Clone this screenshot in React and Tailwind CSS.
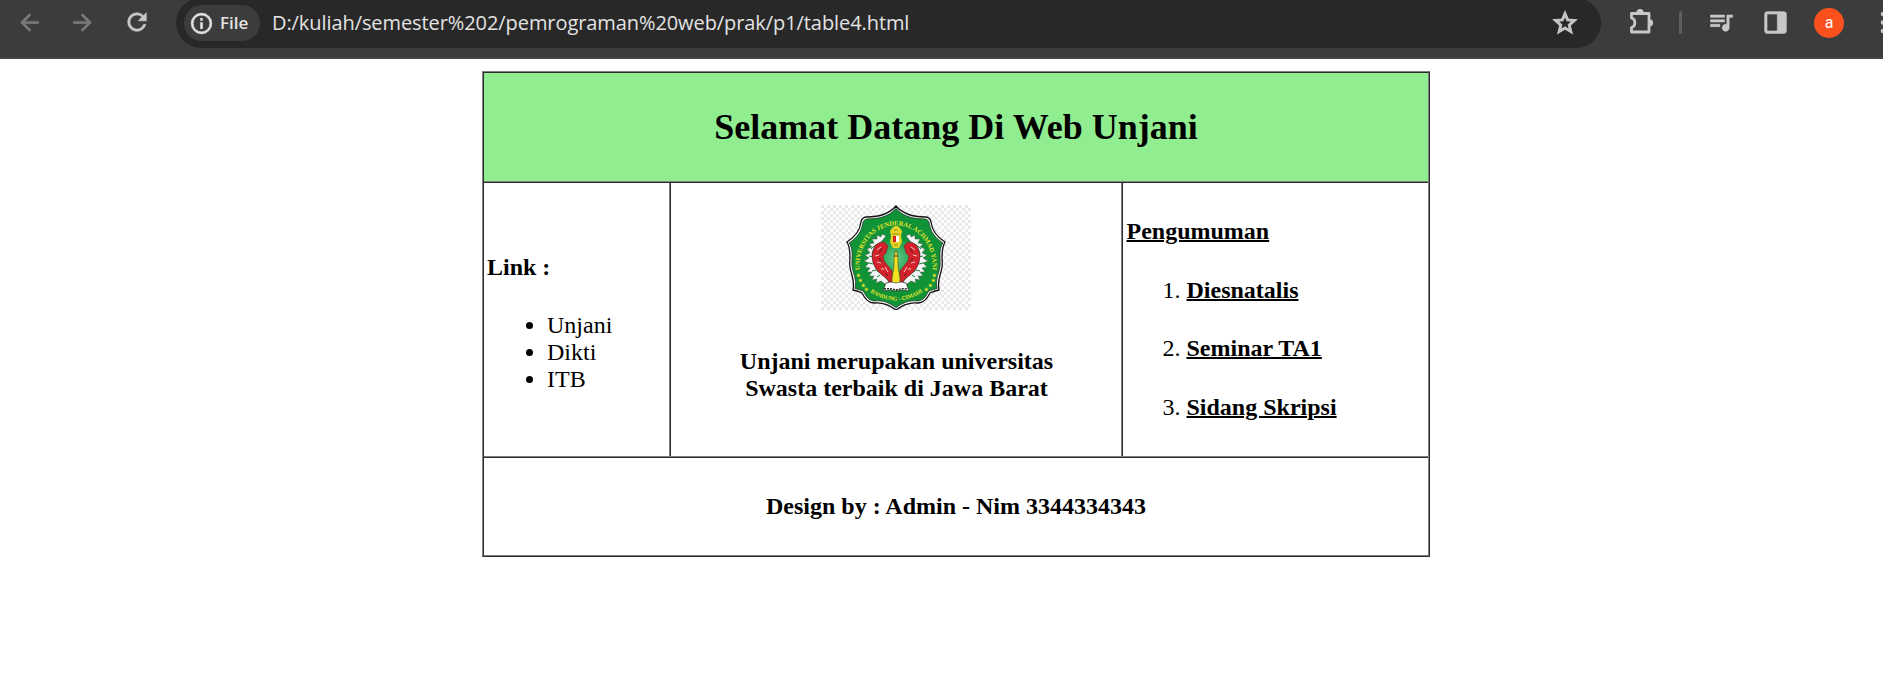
const glyph = "shrink-0 fill-[#c7c7c7] stroke-[#c7c7c7]";

function Icon({ d, className, size = 30, weight = 0.5 }) {
  return (
    <svg viewBox="0 0 24 24" width={size} height={size} strokeWidth={weight} className={className}>
      <path d={d} />
    </svg>
  );
}

function Toolbar() {
  return (
    <header className="flex h-[59px] w-full items-start overflow-hidden border-b-2 border-[#474747] bg-[#3c3c3c]">
      <Icon size={27} className="mt-[9px] ml-4 shrink-0 fill-[#7a7a7a] stroke-[#7a7a7a]" d="M20 11H7.83l5.59-5.59L12 4l-8 8 8 8 1.41-1.41L7.83 13H20v-2z" />
      <Icon size={27} className="mt-[9px] ml-[26px] shrink-0 fill-[#7a7a7a] stroke-[#7a7a7a]" d="M12 4l-1.41 1.41L16.17 11H4v2h12.17l-5.58 5.59L12 20l8-8z" />
      <Icon size={28} className={`mt-2 ml-[27px] ${glyph}`} d="M17.65 6.35A7.96 7.96 0 0 0 12 4a8 8 0 1 0 7.73 10h-2.08A6 6 0 1 1 12 6c1.66 0 3.14.69 4.22 1.78L13 11h7V4z" />
      <div className="-mt-[2px] ml-[25px] flex h-[50px] w-[1425px] shrink-0 items-center rounded-full bg-[#282828] pl-2">
        <div className="flex h-9 w-[76px] items-center rounded-full bg-[#3c3c3c] pl-[5px]">
          <Icon size={25} className="shrink-0 fill-[#e3e3e3] stroke-[#e3e3e3]" d="M11 7h2v2h-2zm0 4h2v6h-2zm1-9a10 10 0 1 0 0 20 10 10 0 0 0 0-20zm0 18a8 8 0 1 1 0-16 8 8 0 0 1 0 16z" />
          <span className="ml-[6px] font-['Open_Sans',sans-serif] text-[17px] font-semibold text-[#e3e3e3]">File</span>
        </div>
        <span className="ml-[12px] font-['Open_Sans',sans-serif] text-[20px] tracking-[-0.08px] whitespace-nowrap text-[#e3e3e3]">
          D:/kuliah/semester%202/pemrograman%20web/prak/p1/table4.html
        </span>
        <Icon size={28} weight={0.9} className={`mr-[22px] ml-auto ${glyph}`} d="M22 9.24l-7.19-.62L12 2 9.19 8.63 2 9.24l5.46 4.73L5.82 21 12 17.27 18.18 21l-1.63-7.03zM12 15.4l-3.76 2.27 1-4.28-3.32-2.88 4.38-.38L12 6.1l1.71 4.04 4.38.38-3.32 2.88 1 4.28z" />
      </div>
      <svg viewBox="0 0 28 28" width="28" height="28" className="mt-[7px] ml-[26px] shrink-0">
        <path d="M4.5 6.500H22V25H4.500V20.500C9 19.500 9 12 4.500 11Z" fill="none" stroke="#c7c7c7" strokeWidth="2.800" strokeLinejoin="round" />
        <path d="M9.500 5.500a3.600 3.600 0 0 1 7.200 0zM22.500 12.200a3.600 3.600 0 0 1 0 7.200z" fill="#c7c7c7" />
      </svg>
      <div className="mt-[11px] ml-[24px] h-[23px] w-[3px] shrink-0 rounded-full bg-[#5f5f5f]" />
      <Icon size={28} className={`mt-2 ml-[25px] ${glyph}`} d="M15 6H3v2h12V6zm0 4H3v2h12v-2zM3 16h8v-2H3v2zM17 6v8.180c-.31-.11-.65-.18-1-.18-1.66 0-3 1.340-3 3s1.340 3 3 3 3-1.340 3-3V8h3V6h-5z" />
      <Icon size={29} className={`mt-2 ml-[26px] ${glyph}`} d="M19 3H5a2 2 0 0 0-2 2v14c0 1.100.9 2 2 2h14a2 2 0 0 0 2-2V5a2 2 0 0 0-2-2zM5 5h8.500v14H5z" />
      <div className="mt-2 ml-6 flex size-[30px] shrink-0 items-center justify-center rounded-full bg-[#f9501e] font-[Roboto,sans-serif] text-[16px] text-white">a</div>
      <svg viewBox="0 0 6 24" width="6" height="24" className="mt-[11px] ml-[36px] shrink-0 fill-[#c7c7c7]">
        <circle cx="3" cy="3" r="2.300" />
        <circle cx="3" cy="11.500" r="2.300" />
        <circle cx="3" cy="20" r="2.300" />
      </svg>
    </header>
  );
}

const shield =
  "M75 1C69 8 60 12 46 12Q41 12 40 17C39 25 34 32 26 37C31 46 28 54 29 62C30 70 34 74 32 85Q37 86 41 88C44 94 47 98 53 98C63 97 69 101 75 105C81 101 87 97 97 98C103 98 106 94 109 88Q113 86 118 85C116 74 120 70 121 62C122 54 119 46 124 37C116 32 111 25 110 17Q109 12 104 12C90 12 81 8 75 1Z";

function Flourish() {
  return (
    <g>
      <path
        d="M65 31L61 29L60 32L56 30L56 34L51 34L53 38L48 39L51 42L46 44L49 48L44 50L48 53L43 56L48 58L44 62L49 63L46 67L51 67L48 71L53 71L51 75L56 74L55 78L60 76L64 79L68 77L64 72L56 66L52 57L51 48L54 40L60 37Z"
        fill="#f4f4f4" stroke="#445f4c" strokeWidth=".5"
      />
      <path d="M50 44l3-3M48 51l4 1M48 58l4 1M51 66l4-1M56 72l3-2" stroke="#118236" strokeWidth="1" />
      <path
        d="M67 41L63 37L58 38L54 41L52 46L51 51L52 57L54 62L57 66L61 70L66 74L69 78L71 78L71 66L67 61L63 56L62 51L65 48L66 44Z"
        fill="#d3222b" stroke="#741c22" strokeWidth=".6"
      />
      <path d="M56 45l4-3M54 51l4-1M56 57l4 1M60 64l3 0M64 62l3 5" stroke="#f3d9d9" strokeWidth=".9" />
      <path d="M61 43l-3 5M58 53l3 4M64 68l3 3" stroke="#3d1a1c" strokeWidth=".7" />
    </g>
  );
}

function Crest() {
  return (
    <svg viewBox="0 0 150 105" width="150" height="105" className="mx-auto block">
      <defs>
        <pattern id="checks" width="6" height="6" patternUnits="userSpaceOnUse">
          <rect width="6" height="6" fill="#fff" />
          <path d="M0 0h3v3H0zM3 3h3v3H3z" fill="#e9e9e9" />
        </pattern>
        <radialGradient id="glow">
          <stop offset="0" stopColor="#62cc8d" />
          <stop offset="1" stopColor="#109337" />
        </radialGradient>
        <path id="topArc" d="M39 67A36.500 40 0 1 1 111 67" />
        <path id="lowArc" d="M48 86Q75 105 103 86" />
      </defs>
      <rect width="150" height="105" fill="url(#checks)" />
      <path d={shield} fill="#fff" stroke="#111" strokeWidth="1.300" />
      <path d={shield} fill="#109337" stroke="#222" strokeWidth=".7" transform="translate(3.400 2.400) scale(.955)" />
      <circle cx="75" cy="54" r="22" fill="url(#glow)" />
      <Flourish />
      <g transform="translate(150 0) scale(-1 1)"><Flourish /></g>
      <path d="M72 22q3-2 6 0l3 4-1 5 1 6-3 6h-6l-3-6 1-6-1-5z" fill="#e5d426" />
      <path d="M73 25h4M71 29h8M73 40h4" stroke="#988b16" strokeWidth="1" />
      <path d="M72 31h3v6h-3z" fill="#d5202a" />
      <path d="M75 31h3v6h-3z" fill="#fff" />
      <path d="M75 45l2 6v11l2 11v6h-8v-6l2-11V51z" fill="#f4df22" stroke="#554c13" strokeWidth=".6" />
      <path d="M73 51h4" stroke="#333" />
      <path d="M65 78q5-2 10 0q5-2 10 0l3 8q-7-2-13 0q-6-2-13 0z" fill="#fff" stroke="#222" strokeWidth=".6" />
      <path d="M63 84q6-1 12 1q6-2 12-1" fill="none" stroke="#222" strokeWidth="1.400" strokeDasharray="2 1" />
      <g fill="#e8e52b" fontFamily="Liberation Serif, serif" fontWeight="bold">
        <text fontSize="6.500" textAnchor="middle"><textPath href="#topArc" startOffset="50%">UNIVERSITAS JENDERAL ACHMAD YANI</textPath></text>
        <text fontSize="5.700" textAnchor="middle"><textPath href="#lowArc" startOffset="50%">BANDUNG - CIMAHI</textPath></text>
        <g fontSize="5" textAnchor="middle">
          <text x="37" y="72">★</text><text x="38.500" y="77">★</text><text x="41.500" y="82">★</text><text x="45" y="86">★</text>
          <text x="113" y="72">★</text><text x="111.500" y="77">★</text><text x="108.500" y="82">★</text><text x="105" y="86">★</text>
        </g>
      </g>
    </svg>
  );
}

function Divider() {
  return <div className="w-[2px] shrink-0 border-r border-[#2c2c2c] bg-[#808080]" />;
}

function Rule() {
  return <div className="h-[2px] border-b border-[#2c2c2c] bg-[#808080]" />;
}

export default function App() {
  return (
    <div className="min-h-[697px] w-full overflow-hidden bg-white">
      <Toolbar />
      <main className="mt-3 ml-[482px] w-[948px] border-t border-r border-b border-l border-t-[#808080] border-r-[#2c2c2c] border-b-[#2c2c2c] border-l-[#808080] font-['Liberation_Serif',serif] text-[24px] leading-[27px] text-black">
        <div className="border border-t-[#2c2c2c] border-r-[#808080] border-b-[#808080] border-l-[#2c2c2c]">
          <div className="flex h-[108px] items-center justify-center bg-[#90ee90]">
            <h1 className="text-[36px] leading-[42px] font-bold">Selamat Datang Di Web Unjani</h1>
          </div>
          <Rule />
          <div className="flex h-[273px] bg-white">
            <section className="w-[185px] shrink-0 pt-[71px] pl-[3px]">
              <h2 className="font-bold">Link :</h2>
              <ul className="mt-[31px] list-disc pl-[60px]">
                <li>Unjani</li>
                <li>Dikti</li>
                <li>ITB</li>
              </ul>
            </section>
            <Divider />
            <section className="w-[450px] shrink-0 pt-[22px] text-center">
              <Crest />
              <p className="mt-[38px] pl-px font-bold">Unjani merupakan universitas<br />Swasta terbaik di Jawa Barat</p>
            </section>
            <Divider />
            <section className="flex-1 pt-[35px] pl-[3.5px] font-bold">
              <h2 className="underline decoration-2">Pengumuman</h2>
              <ol className="mt-[31.9px] flex list-decimal flex-col gap-[31.5px] pl-[60px] marker:font-normal">
                <li className="underline decoration-2">Diesnatalis</li>
                <li className="underline decoration-2">Seminar TA1</li>
                <li className="underline decoration-2">Sidang Skripsi</li>
              </ol>
            </section>
          </div>
          <Rule />
          <footer className="flex h-[97px] items-center justify-center bg-white font-bold">Design by : Admin - Nim 3344334343</footer>
        </div>
      </main>
    </div>
  );
}
